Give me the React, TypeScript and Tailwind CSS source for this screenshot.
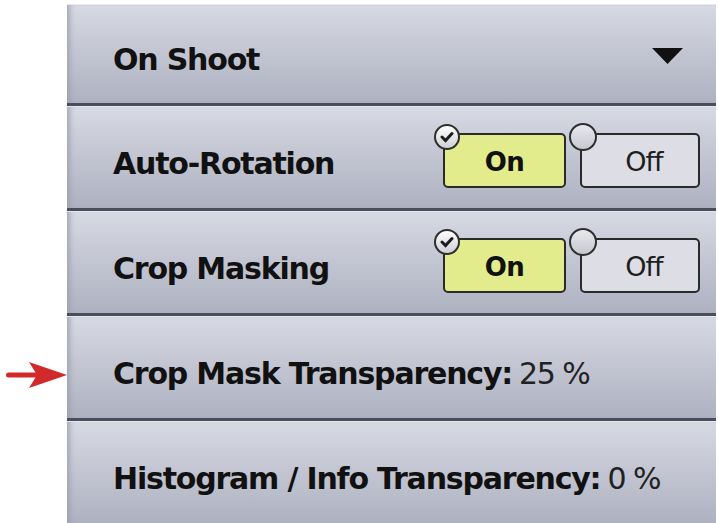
import type { ReactNode } from "react";

const font = { fontFamily: '"DejaVu Sans", Verdana, sans-serif' };

function Row({ children, first, arrow }: { children: ReactNode; first?: boolean; arrow?: boolean }) {
  return (
    <div className={`flex ${first ? "h-[102px]" : "h-[105px]"}`}>
      <div className="flex w-[67px] shrink-0 items-start bg-white">
        {arrow && (
          <svg className="ml-[6px] mt-[45px] shrink-0" width="61" height="28" viewBox="0 0 61 28">
            <rect x="0" y="11.5" width="32" height="5" rx="2.5" fill="#d22a2a" />
            <path d="M23 1 L61 14 L23 27 L31 14 Z" fill="#d22a2a" />
          </svg>
        )}
      </div>
      <div className="flex w-[649px] border-b-[3px] border-[#4a4d5c] bg-linear-to-b from-[#d7d9e3] to-[#aeb1c0] shadow-[inset_0_1px_0_#e6e8ef,inset_6px_0_6px_-4px_#9a9dab]">
        {children}
      </div>
    </div>
  );
}

function Label({ children, value }: { children: ReactNode; value?: string }) {
  return (
    <div className="flex items-center pl-[46px] pt-[13px] text-[30px] leading-none tracking-[-1.2px] text-[#111]">
      <span className="font-bold">{children}</span>
      {value && <span className="ml-[7px] font-normal tracking-[-1.5px] text-[#222]">{value}</span>}
    </div>
  );
}

function Check() {
  return (
    <div className="absolute left-[-11px] top-[-11px] flex h-[26px] w-[26px] items-center justify-center rounded-full border-2 border-[#2e2e2e] bg-linear-to-b from-white to-[#cfd0d6]">
      <svg width="14" height="12" viewBox="0 0 14 12">
        <path d="M2 6 L5.5 9.5 L12 2.5" stroke="#1c1c1c" strokeWidth="3" fill="none" strokeLinecap="round" />
      </svg>
    </div>
  );
}

function Toggle() {
  return (
    <div className="ml-auto mr-[16px] mt-[27px] flex gap-[14px] self-start">
      <div className="relative flex h-[55px] w-[123px] items-center justify-center rounded-[5px] border-2 border-[#2a2a2a] bg-[#e2ec8c] pt-1 text-[26px] font-bold tracking-[-0.5px] text-[#111]">
        <Check />
        On
      </div>
      <div className="relative flex h-[55px] w-[120px] items-center justify-center rounded-[5px] border-2 border-[#2a2a2a] bg-[#dcdde5] pl-2 pt-1 text-[27px] font-normal tracking-[-1px] text-[#1e1e1e]">
        <div className="absolute left-[-13px] top-[-12px] h-[28px] w-[28px] rounded-full border-2 border-[#2e2e2e] bg-linear-to-b from-[#e8e9ee] to-[#c6c8d0]" />
        Off
      </div>
    </div>
  );
}

export default function App() {
  return (
    <div className="h-[523px] w-[718px] overflow-hidden bg-white pt-[4px]" style={font}>
      <Row first>
        <Label>On Shoot</Label>
        <svg className="ml-auto mr-[33px] mt-[44px] shrink-0" width="31" height="16" viewBox="0 0 31 16">
          <path d="M0 0 L31 0 L15.5 16 Z" fill="#111" />
        </svg>
      </Row>
      <Row>
        <Label>Auto-Rotation</Label>
        <Toggle />
      </Row>
      <Row>
        <Label>Crop Masking</Label>
        <Toggle />
      </Row>
      <Row arrow>
        <Label value="25 %">Crop Mask Transparency:</Label>
      </Row>
      <Row>
        <Label value="0 %">Histogram / Info Transparency:</Label>
      </Row>
    </div>
  );
}
